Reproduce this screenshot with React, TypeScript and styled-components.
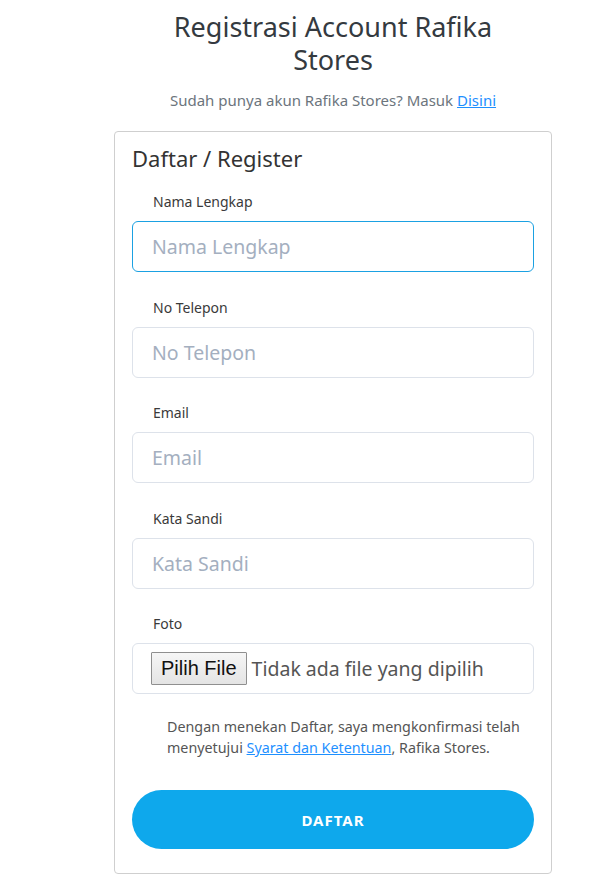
import React from "react";
import styled, { createGlobalStyle } from "styled-components";

const GlobalStyle = createGlobalStyle`
  body {
    margin: 0;
    background: #fff;
    font-family: "Noto Sans", "Open Sans", sans-serif;
    color: #333;
  }
`;

const Page = styled.div`
  width: 438px;
  margin-left: 114px;
  padding-top: 10px;
  display: flex;
  flex-direction: column;
  align-items: center;
`;

const Heading = styled.h1`
  margin: 0;
  max-width: 340px;
  font-size: 27px;
  line-height: 33px;
  font-weight: 400;
  text-align: center;
  color: #343a40;
`;

const SubText = styled.p`
  margin: 14px 0 21px;
  font-size: 15px;
  line-height: 20px;
  color: #6c757d;
  text-align: center;
`;

const Link = styled.a`
  color: #1e90ff;
  text-decoration: underline;
`;

const Card = styled.div`
  align-self: stretch;
  border: 1px solid #cfcfcf;
  border-radius: 4px;
  padding: 13px 17px 24px;
`;

const CardTitle = styled.h2`
  margin: 0 0 22px;
  font-size: 22px;
  line-height: 26px;
  font-weight: 400;
  color: #333;
`;

const Field = styled.div<{ $last?: boolean }>`
  display: flex;
  flex-direction: column;
  margin-bottom: ${(p) => (p.$last ? "0" : "26.5px")};
`;

const Label = styled.label`
  padding-left: 21px;
  font-size: 14px;
  line-height: 18px;
  font-weight: 400;
  color: #3a3a3a;
  margin-bottom: 10px;
`;

const Input = styled.input<{ $focused?: boolean }>`
  box-sizing: border-box;
  height: 51px;
  width: 100%;
  border: 1px solid ${(p) => (p.$focused ? "#1ba1e2" : "#dde2ea")};
  border-radius: 6px;
  padding: 0 19px;
  font-family: inherit;
  font-size: 19.5px;
  color: #333;
  outline: none;
  &::placeholder {
    color: #a4afbf;
  }
`;

const FileBox = styled.div`
  box-sizing: border-box;
  height: 51px;
  border: 1px solid #dde2ea;
  border-radius: 6px;
  padding: 0 18px;
  display: flex;
  align-items: center;
  gap: 5px;
`;

const FileButton = styled.button`
  height: 33px;
  padding: 0 9px;
  background: linear-gradient(#f6f6f6, #e4e4e4);
  border: 1px solid #8f8f8f;
  border-radius: 1px;
  font-family: "Liberation Sans", Arial, sans-serif;
  font-size: 20px;
  color: #111;
`;

const FileText = styled.span`
  font-size: 19.5px;
  color: #555;
`;

const Terms = styled.p`
  margin: 22px 0 32px;
  padding: 0 0 0 35px;
  font-size: 14.3px;
  line-height: 21px;
  color: #555;
`;

const SubmitButton = styled.button`
  width: 100%;
  height: 59px;
  border: none;
  border-radius: 30px;
  background: #0ea8ec;
  color: #fff;
  font-family: inherit;
  font-size: 15px;
  font-weight: 700;
  letter-spacing: 1px;
`;

const fields = [
  { label: "Nama Lengkap", type: "text" },
  { label: "No Telepon", type: "tel" },
  { label: "Email", type: "email" },
  { label: "Kata Sandi", type: "password" },
];

export default function App() {
  return (
    <>
      <GlobalStyle />
      <Page>
        <Heading>Registrasi Account Rafika Stores</Heading>
        <SubText>
          Sudah punya akun Rafika Stores? Masuk <Link href="#">Disini</Link>
        </SubText>
        <Card>
          <CardTitle>Daftar / Register</CardTitle>
          {fields.map((f, i) => (
            <Field key={f.label}>
              <Label>{f.label}</Label>
              <Input type={f.type} placeholder={f.label} $focused={i === 0} />
            </Field>
          ))}
          <Field $last>
            <Label>Foto</Label>
            <FileBox>
              <FileButton type="button">Pilih File</FileButton>
              <FileText>Tidak ada file yang dipilih</FileText>
            </FileBox>
          </Field>
          <Terms>
            Dengan menekan Daftar, saya mengkonfirmasi telah menyetujui{" "}
            <Link href="#">Syarat dan Ketentuan</Link>, Rafika Stores.
          </Terms>
          <SubmitButton type="submit">DAFTAR</SubmitButton>
        </Card>
      </Page>
    </>
  );
}
